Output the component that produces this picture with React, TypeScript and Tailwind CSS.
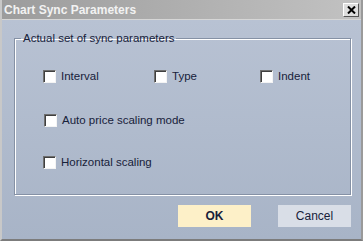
import React from 'react';

const font = { fontFamily: '"Liberation Sans", Arial, sans-serif' };

const CheckItem: React.FC<{ label: string; className?: string }> = ({ label, className }) => (
  <label className={`flex items-center gap-[5px] h-[14px] ${className ?? ''}`}>
    <span className="w-[13px] h-[13px] shrink-0 bg-white border border-t-[#6f6f6f] border-l-[#6f6f6f] border-r-[#f4f4f4] border-b-[#f4f4f4] shadow-[inset_1px_1px_0_#3f3f3f]" />
    <span className="text-[11.5px] leading-[14px] text-[#17213a]">{label}</span>
  </label>
);

const App: React.FC = () => {
  return (
    <div
      style={font}
      className="w-[363px] h-[241px] flex flex-col bg-[#a3a3a3] border-l-2 border-l-[#c8c8c8] border-r-2 border-r-[#9a9a9a] border-b-2 border-b-[#7c7c7c] overflow-hidden select-none"
    >
      {/* title bar */}
      <div className="h-[20px] shrink-0 flex items-center justify-between pl-[2px] pr-[2px] bg-gradient-to-r from-[#9c9c9c] to-[#c2c2c2] border-b border-b-[#d6d6d6]">
        <span className="text-[12px] font-bold text-[#f2f2f2] leading-none">Chart Sync Parameters</span>
        <button className="w-[16px] h-[14px] flex items-center justify-center bg-[#dedede] border border-t-white border-l-white border-r-[#555] border-b-[#555]">
          <svg width="9" height="8" viewBox="0 0 9 8">
            <path d="M1 0.5 L8 7.5 M8 0.5 L1 7.5" stroke="#000" strokeWidth="2" />
          </svg>
        </button>
      </div>

      {/* body */}
      <div className="flex-1 flex flex-col bg-gradient-to-b from-[#b8c2d3] to-[#a8b4c7] pl-[12px] pr-[10px] pt-[11px] pb-[12px]">
        <fieldset className="border border-[#8591a5] shadow-[inset_1px_1px_0_#ffffff,1px_1px_0_#ffffff] pl-[28px] pt-[24px] pb-[25px] w-[337px]">
          <legend className="-ml-[22px] px-[2px] text-[11.5px] leading-[14px] text-[#17213a]">
            Actual set of sync parameters
          </legend>
          <div className="flex">
            <CheckItem label="Interval" className="w-[111px]" />
            <CheckItem label="Type" className="w-[106px]" />
            <CheckItem label="Indent" />
          </div>
          <div className="mt-[30px] ml-[1px]">
            <CheckItem label="Auto price scaling mode" />
          </div>
          <div className="mt-[28px]">
            <CheckItem label="Horizontal scaling" />
          </div>
        </fieldset>

        <div className="flex justify-end gap-[27px] mt-auto">
          <button className="w-[73px] h-[22px] bg-[#fdf0c8] text-[12px] font-bold text-[#17213a]">OK</button>
          <button className="w-[73px] h-[22px] bg-[#d9dee7] text-[12px] text-[#17213a]">Cancel</button>
        </div>
      </div>
    </div>
  );
};

export default App;
